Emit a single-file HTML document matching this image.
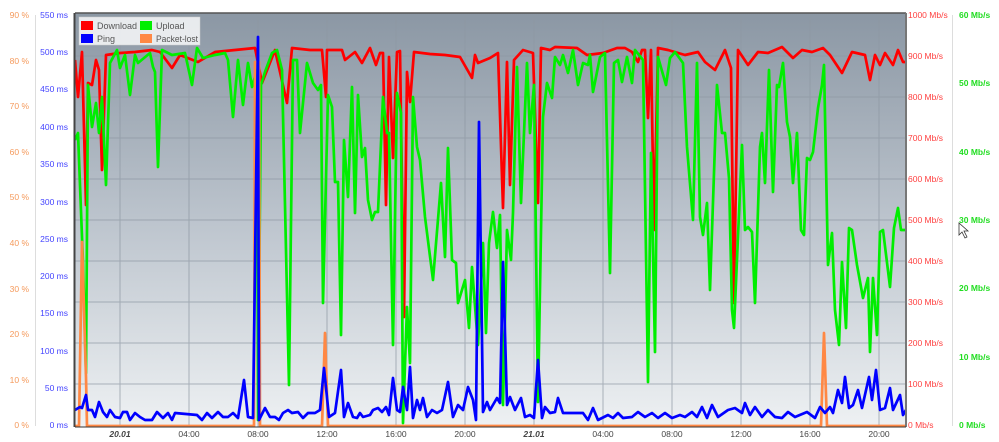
<!DOCTYPE html>
<html><head><meta charset="utf-8"><style>
html,body{margin:0;padding:0;background:#fff;}
svg{display:block;font-family:"Liberation Sans",sans-serif;}
</style></head><body>
<svg width="999" height="442" viewBox="0 0 999 442" xmlns="http://www.w3.org/2000/svg">
<defs>
<linearGradient id="bg" x1="0" y1="0" x2="0" y2="1">
<stop offset="0" stop-color="#8b97a4"/>
<stop offset="0.5" stop-color="#bcc4cd"/>
<stop offset="1" stop-color="#eef1f3"/>
</linearGradient>
<clipPath id="cp"><rect x="75" y="13" width="831" height="414"/></clipPath>
</defs>
<rect x="75" y="13" width="831" height="414" fill="url(#bg)"/>
<g stroke="#8e98a3" stroke-width="1" opacity="0.7">
<line x1="75" y1="56" x2="906" y2="56"/><line x1="75" y1="97" x2="906" y2="97"/><line x1="75" y1="138" x2="906" y2="138"/><line x1="75" y1="179" x2="906" y2="179"/><line x1="75" y1="220" x2="906" y2="220"/><line x1="75" y1="261" x2="906" y2="261"/><line x1="75" y1="302" x2="906" y2="302"/><line x1="75" y1="343" x2="906" y2="343"/><line x1="75" y1="384" x2="906" y2="384"/>
<line x1="120" y1="13" x2="120" y2="427"/><line x1="189" y1="13" x2="189" y2="427"/><line x1="258" y1="13" x2="258" y2="427"/><line x1="327" y1="13" x2="327" y2="427"/><line x1="396" y1="13" x2="396" y2="427"/><line x1="465" y1="13" x2="465" y2="427"/><line x1="534" y1="13" x2="534" y2="427"/><line x1="603" y1="13" x2="603" y2="427"/><line x1="672" y1="13" x2="672" y2="427"/><line x1="741" y1="13" x2="741" y2="427"/><line x1="810" y1="13" x2="810" y2="427"/><line x1="879" y1="13" x2="879" y2="427"/>
</g>
<g clip-path="url(#cp)" fill="none" stroke-width="2.7" stroke-linejoin="round">
<polyline stroke="#ff0000" points="75,60 78,97 82,52 86,205 88,83 92,85 96,60 99,70 102,170 106,55 120,53 135,52 152,50 160,52 172,68 180,55 198,62 215,52 235,50 255,48 262,83 275,50 287,103 292,48 310,50 322,50 326,97 327,50 342,50 345,60 355,52 362,63 370,48 376,65 380,53 383,53 386,205 389,57 393,158 397,52 400,51 404,317 407,72 410,102 414,52 430,54 445,55 460,57 472,78 475,55 478,63 490,58 498,53 503,208 507,62 510,185 514,60 523,50 533,53 538,203 541,48 550,50 555,47 577,48 587,55 603,53 617,48 625,48 632,52 638,62 642,50 645,50 648,118 651,50 654,230 658,48 668,50 685,55 698,52 705,62 715,70 725,50 731,68 734,303 738,50 748,65 758,52 768,53 782,47 793,58 802,50 812,52 823,48 830,55 842,73 852,52 865,55 870,80 875,55 880,65 885,53 893,65 898,50 903,62 907,62"/>
<polyline stroke="#00ee00" points="75,140 78,133 83,263 86,373 88,85 92,127 96,103 99,133 102,97 106,185 110,63 117,50 120,68 125,55 130,95 135,55 138,63 150,53 153,67 155,72 158,167 162,50 172,55 185,53 192,85 197,48 203,58 215,55 225,53 228,60 233,117 238,60 243,105 248,63 252,87 257,70 258,420 261,85 265,72 272,53 277,50 282,70 289,385 293,60 297,60 300,133 307,63 313,83 318,90 321,85 323,303 328,95 332,107 335,182 338,182 341,335 344,140 348,197 352,87 355,213 358,95 362,157 365,148 368,200 372,220 375,212 378,212 383,97 387,133 389,133 393,345 397,93 401,113 403,423 407,307 410,363 413,97 417,147 420,160 425,217 433,280 441,183 445,257 448,148 452,260 456,263 458,303 465,280 469,328 472,267 478,345 483,243 486,333 489,243 493,212 497,248 500,215 503,405 507,230 511,260 513,213 517,67 521,203 527,63 530,133 534,85 538,402 543,117 547,83 552,98 555,57 560,65 563,55 568,73 573,50 578,85 583,63 588,65 590,55 593,92 600,57 605,53 610,273 614,63 618,60 622,82 627,57 632,83 635,50 643,60 648,382 651,153 655,352 658,57 666,85 670,58 675,52 683,63 687,147 693,220 697,63 700,217 703,235 707,203 710,290 717,85 722,133 725,133 729,178 732,310 734,328 742,145 745,230 748,227 752,232 755,303 760,147 762,133 765,183 769,70 773,192 777,85 779,87 783,63 787,122 790,137 793,183 797,133 801,230 804,235 807,158 810,160 813,152 818,108 822,85 824,65 828,265 832,233 835,310 839,345 842,262 846,328 849,228 852,230 857,265 863,298 868,278 870,352 873,278 877,335 880,232 883,230 890,287 894,228 898,208 901,230 907,230"/>
<polyline stroke="#ff8844" points="75,426 79,426 82,242 86,377 87,426 254,426 255,62 259,62 260,426 322,426 325,333 328,426 821,426 824,333 827,426 907,426"/>
<polyline stroke="#0000ff" points="75,410 80,407 82,408 86,395 88,410 92,410 95,417 99,402 103,412 107,417 110,410 115,417 120,418 123,412 127,412 130,420 135,413 140,417 145,420 152,420 157,412 163,418 168,413 172,420 175,413 197,415 202,420 207,413 212,418 218,412 223,417 228,417 233,413 238,418 244,380 248,417 253,418 258,37 259,420 265,408 270,417 275,417 279,420 283,413 288,410 292,413 298,412 303,418 308,413 315,413 320,410 324,368 329,417 335,413 341,370 344,417 348,403 353,417 357,418 360,413 363,417 370,415 373,410 378,408 382,412 386,407 389,415 393,378 397,410 400,412 403,387 407,410 410,367 413,418 417,400 420,410 423,398 427,417 432,410 437,413 442,410 448,382 453,417 458,405 463,410 468,387 473,400 476,420 479,122 483,412 487,402 490,410 497,398 500,403 503,262 507,405 510,397 515,410 521,398 525,417 530,415 534,418 538,360 542,418 545,407 550,413 555,412 558,398 563,413 577,413 583,413 588,420 593,408 598,420 608,415 613,418 618,413 623,418 632,417 638,412 645,417 652,413 658,418 665,413 672,418 680,415 685,417 692,412 697,417 702,407 707,418 712,405 718,417 728,410 735,408 742,413 745,403 750,415 755,407 762,417 768,410 775,417 782,418 788,412 795,417 807,412 815,418 820,407 825,413 830,407 833,413 838,390 842,403 845,377 849,408 853,405 858,390 862,408 869,377 872,400 876,370 880,410 885,408 890,388 893,410 900,395 903,415 906,410"/>
</g>
<line x1="75" y1="13" x2="906" y2="13" stroke="#555" stroke-width="1.5"/>
<line x1="74.5" y1="13" x2="74.5" y2="427" stroke="#444" stroke-width="2"/>
<line x1="906" y1="13" x2="906" y2="427" stroke="#777" stroke-width="2"/>
<line x1="75" y1="427" x2="906" y2="427" stroke="#333" stroke-width="1"/>
<rect x="79" y="17" width="121" height="28" fill="#fff" fill-opacity="0.8" stroke="#ccc" stroke-width="0.5"/>
<rect x="81" y="21" width="12" height="9" fill="#ff0000"/>
<rect x="140" y="21" width="12" height="9" fill="#00ee00"/>
<rect x="81" y="34" width="12" height="9" fill="#0000ff"/>
<rect x="140" y="34" width="12" height="9" fill="#ff8844"/>
<g font-size="9" fill="#555">
<text x="97" y="29" textLength="40" lengthAdjust="spacingAndGlyphs">Download</text><text x="156" y="29">Upload</text>
<text x="97" y="42">Ping</text><text x="156" y="42" textLength="42" lengthAdjust="spacingAndGlyphs">Packet-lost</text>
</g>
<line x1="35.5" y1="15" x2="35.5" y2="426" stroke="#ddd"/>
<g font-size="8.5" fill="#f59a5c" text-anchor="end">
<text x="29" y="18">90 %</text><text x="29" y="64">80 %</text><text x="29" y="109">70 %</text><text x="29" y="155">60 %</text><text x="29" y="200">50 %</text><text x="29" y="246">40 %</text><text x="29" y="292">30 %</text><text x="29" y="337">20 %</text><text x="29" y="383">10 %</text><text x="29" y="428">0 %</text>
</g>
<g font-size="8.5" fill="#4444ff" text-anchor="end">
<text x="68" y="18">550 ms</text><text x="68" y="55">500 ms</text><text x="68" y="92">450 ms</text><text x="68" y="130">400 ms</text><text x="68" y="167">350 ms</text><text x="68" y="205">300 ms</text><text x="68" y="242">250 ms</text><text x="68" y="279">200 ms</text><text x="68" y="316">150 ms</text><text x="68" y="354">100 ms</text><text x="68" y="391">50 ms</text><text x="68" y="428">0 ms</text>
</g>
<g font-size="8.5" fill="#ff4040">
<text x="908" y="18">1000 Mb/s</text><text x="908" y="59">900 Mb/s</text><text x="908" y="100">800 Mb/s</text><text x="908" y="141">700 Mb/s</text><text x="908" y="182">600 Mb/s</text><text x="908" y="223">500 Mb/s</text><text x="908" y="264">400 Mb/s</text><text x="908" y="305">300 Mb/s</text><text x="908" y="346">200 Mb/s</text><text x="908" y="387">100 Mb/s</text><text x="908" y="428">0 Mb/s</text>
</g>
<line x1="952.5" y1="15" x2="952.5" y2="426" stroke="#ddd"/>
<g font-size="8.5" fill="#22dd22" font-weight="bold">
<text x="959" y="18">60 Mb/s</text><text x="959" y="86">50 Mb/s</text><text x="959" y="155">40 Mb/s</text><text x="959" y="223">30 Mb/s</text><text x="959" y="291">20 Mb/s</text><text x="959" y="360">10 Mb/s</text><text x="959" y="428">0 Mb/s</text>
</g>
<g font-size="8.5" fill="#444" text-anchor="middle">
<text x="120" y="437" font-weight="bold" font-style="italic">20.01</text><text x="189" y="437">04:00</text><text x="258" y="437">08:00</text><text x="327" y="437">12:00</text><text x="396" y="437">16:00</text><text x="465" y="437">20:00</text><text x="534" y="437" font-weight="bold" font-style="italic">21.01</text><text x="603" y="437">04:00</text><text x="672" y="437">08:00</text><text x="741" y="437">12:00</text><text x="810" y="437">16:00</text><text x="879" y="437">20:00</text>
</g>
<path d="M959 223 L959 235 L962 232 L965 238 L967 237 L964 231 L968 231 Z" fill="#fff" stroke="#333" stroke-width="0.8"/>
</svg>
</body></html>
